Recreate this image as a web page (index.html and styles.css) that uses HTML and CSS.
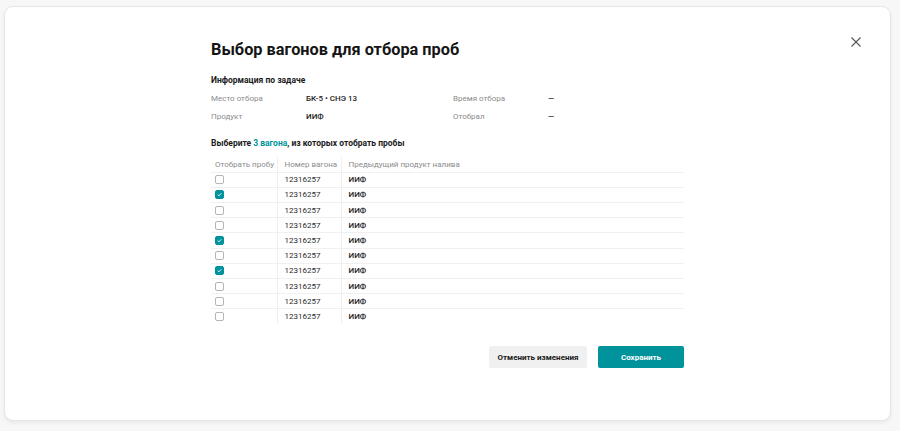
FILE: index.html
```html
<!DOCTYPE html>
<html lang="ru">
<head>
<meta charset="utf-8">
<link rel="stylesheet" href="styles.css">
</head>
<body>
<div class="modal">
  <button class="close" aria-label="Закрыть">
    <svg width="10" height="10" viewBox="0 0 10 10"><path d="M0.5 0.5L9.5 9.5M9.5 0.5L0.5 9.5" stroke="#555" stroke-width="1.1" fill="none"/></svg>
  </button>
  <div class="content">
    <h1 class="title">Выбор вагонов для отбора проб</h1>
    <h2 class="subtitle">Информация по задаче</h2>
    <div class="info">
      <span class="label">Место отбора</span><span class="value">БК-5 • СНЭ 13</span>
      <span class="label">Время отбора</span><span class="value">—</span>
      <span class="label">Продукт</span><span class="value">ИИФ</span>
      <span class="label">Отобрал</span><span class="value">—</span>
    </div>
    <h2 class="subtitle pick">Выберите <span class="accent">3 вагона</span>, из которых отобрать пробы</h2>
    <table class="grid">
      <thead>
        <tr><th class="c1">Отобрать пробу</th><th class="c2">Номер вагона</th><th>Предыдущий продукт налива</th></tr>
      </thead>
      <tbody>
        <tr><td><span class="cb"></span></td><td>12316257</td><td class="prod">ИИФ</td></tr>
        <tr><td><span class="cb on"></span></td><td>12316257</td><td class="prod">ИИФ</td></tr>
        <tr><td><span class="cb"></span></td><td>12316257</td><td class="prod">ИИФ</td></tr>
        <tr><td><span class="cb"></span></td><td>12316257</td><td class="prod">ИИФ</td></tr>
        <tr><td><span class="cb on"></span></td><td>12316257</td><td class="prod">ИИФ</td></tr>
        <tr><td><span class="cb"></span></td><td>12316257</td><td class="prod">ИИФ</td></tr>
        <tr><td><span class="cb on"></span></td><td>12316257</td><td class="prod">ИИФ</td></tr>
        <tr><td><span class="cb"></span></td><td>12316257</td><td class="prod">ИИФ</td></tr>
        <tr><td><span class="cb"></span></td><td>12316257</td><td class="prod">ИИФ</td></tr>
        <tr><td><span class="cb"></span></td><td>12316257</td><td class="prod">ИИФ</td></tr>
      </tbody>
    </table>
    <div class="actions">
      <button class="btn secondary">Отменить изменения</button>
      <button class="btn primary">Сохранить</button>
    </div>
  </div>
</div>
</body>
</html>
```
FILE: styles.css
```css
* { box-sizing: border-box; }
html, body { height: 100%; }
body {
  margin: 0;
  padding: 6px 9px 10px 4px;
  background: #f7f7f8;
  font-family: Roboto, "Noto Sans", sans-serif;
  color: #1f1f1f;
}
.modal {
  position: relative;
  height: 415px;
  background: #fff;
  border: 1px solid #e6e6e8;
  border-radius: 9px;
  box-shadow: 0 2px 4px rgba(0,0,0,0.06);
  display: flex;
  justify-content: center;
}
.close {
  position: absolute;
  top: 30px;
  right: 29px;
  width: 10px;
  height: 10px;
  padding: 0;
  border: 0;
  background: none;
  display: flex;
}
.content {
  width: 473px;
  padding-top: 33px;
  display: flex;
  flex-direction: column;
}
.title {
  margin: 0;
  font-size: 16.3px;
  line-height: 20px;
  font-weight: 700;
  color: #151515;
}
.subtitle {
  margin: 14px 0 0;
  font-size: 8.5px;
  line-height: 12px;
  font-weight: 700;
  color: #1a1a1a;
}
.pick { margin-top: 14px; }
.accent { color: #00939b; }
.info {
  margin-top: 7px;
  display: grid;
  grid-template-columns: 95px 147px 95px 1fr;
  row-gap: 6px;
  font-size: 8px;
  line-height: 12px;
}
.label { color: #8c8c8c; }
.value { color: #1a1a1a; font-weight: 500; }
.grid {
  margin-top: 8px;
  width: 100%;
  border-collapse: collapse;
  font-size: 8px;
}
.grid th, .grid td {
  height: 15.2px;
  padding: 0 0 0 4px;
  text-align: left;
  border-bottom: 1px solid #f0f0f0;
  vertical-align: middle;
}
.grid th {
  font-weight: 400;
  color: #8c8c8c;
}
.grid td { color: #2a2a2a; font-weight: 400; }
.grid td.prod { font-weight: 500; color: #1a1a1a; }
.grid th + th, .grid td + td { border-left: 1px solid #f0f0f0; }
.grid td + td, .grid th + th { padding-left: 7px; }
.grid .c1 { width: 66px; }
.grid .c2 { width: 64px; }
.grid tbody tr:last-child td { border-bottom: 0; }
.cb {
  display: block;
  width: 9px;
  height: 9px;
  border: 1px solid #b5b5b5;
  border-radius: 2px;
  background: #fff;
}
.cb.on {
  border-color: #00939b;
  background: #00939b url("data:image/svg+xml,%3Csvg xmlns='http://www.w3.org/2000/svg' viewBox='0 0 8 8'%3E%3Cpath d='M2 4.2L3.4 5.5L6 2.6' stroke='white' stroke-width='1' fill='none'/%3E%3C/svg%3E") center/100% no-repeat;
}
.actions {
  margin-top: 22px;
  display: flex;
  justify-content: flex-end;
  gap: 11px;
}
.btn {
  height: 22px;
  border: 0;
  border-radius: 2px;
  font-family: inherit;
  font-size: 8px;
  font-weight: 700;
}
.secondary { width: 98px; background: #f0f0f0; color: #1a1a1a; }
.primary { width: 86px; background: #00939b; color: #fff; }
```
